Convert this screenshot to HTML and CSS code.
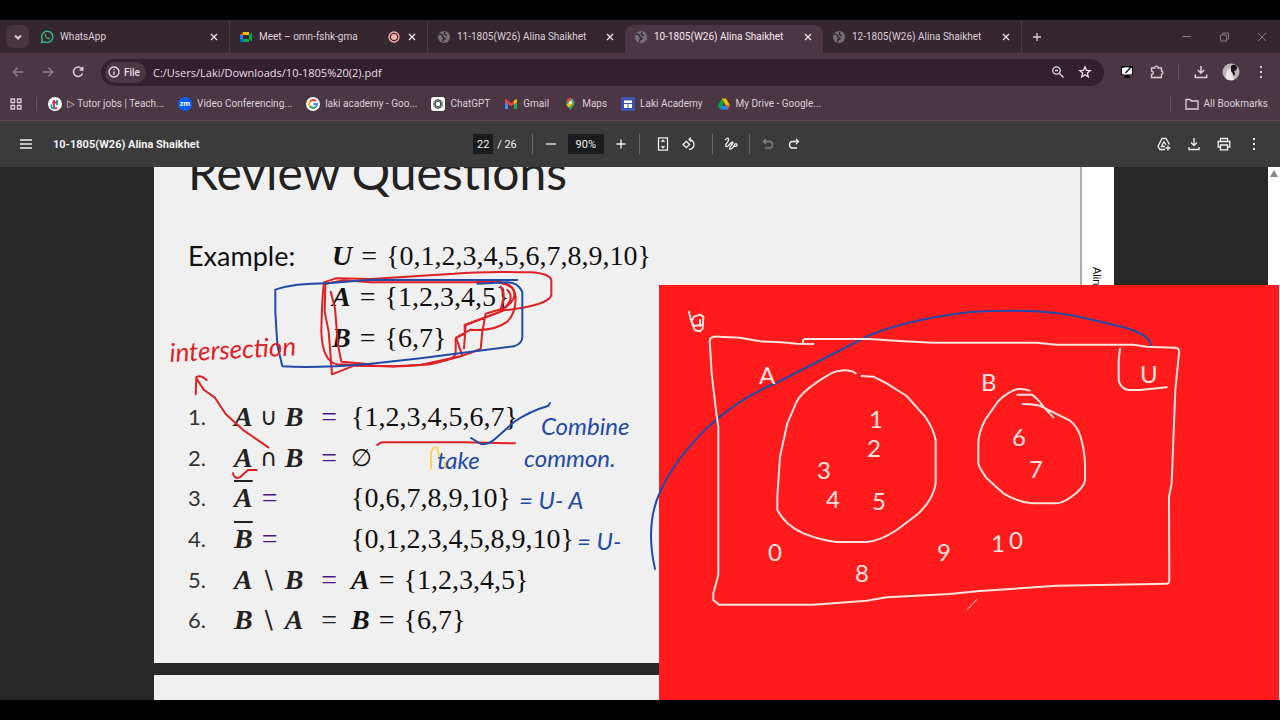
FILE: index.html
```html
<!DOCTYPE html>
<html lang="en">
<head>
<meta charset="utf-8">
<title>10-1805(W26) Alina Shaikhet</title>
<link rel="stylesheet" href="styles.css">
</head>
<body>
<svg class="defs" aria-hidden="true">
  <symbol id="close" viewBox="0 0 12 12"><path d="M3 3l6 6M9 3l-6 6"/></symbol>
  <symbol id="globe" viewBox="0 0 14 14"><circle cx="7" cy="7" r="6" fill="#77717a" stroke="none"/><path d="M2 4.500q3-1 3.500 1.500T9 8.500M8 2q-2 3 2 3.500M6 12q-1-3 2-3" stroke="#352730" stroke-width="1.500"/></symbol>
</svg>
<div class="browser">
  <header class="tabs">
    <button class="tab-search" aria-label="Search tabs"><svg class="icon small" viewBox="0 0 12 12"><path d="M3 4.500l3 3 3-3" stroke-width="2"/></svg></button>
    <div class="tab">
      <svg class="icon fav whatsapp" viewBox="0 0 14 14"><path d="M1.500 12.500l.8-3A5.600 5.600 0 1 1 4.600 11.800z" stroke-width="1.500"/><path d="M4.600 4.500c.2 3 2 4.800 4.800 5l.5-1.500-1.500-.8-.9.6C6.600 7.300 6 6.600 6 6l.6-.8-.7-1.400z" fill="currentColor" stroke="none"/></svg>
      <span class="tab-title">WhatsApp</span>
      <button class="x" aria-label="Close tab"><svg class="icon small"><use href="#close"/></svg></button>
    </div>
    <div class="tab split">
      <svg class="icon fav" viewBox="0 0 14 14" stroke="none"><path d="M1 5l3-3v3z" fill="#ea4335"/><path d="M4 2h6v3H4z" fill="#fbbc04"/><path d="M1 5h3v4H1z" fill="#2684fc"/><path d="M1 9h3v3H2q-1 0-1-1z" fill="#0066da"/><path d="M4 9h6v3H4zM10 5l3-2.500v9L10 9z" fill="#00ac47"/></svg>
      <span class="tab-title">Meet – omn-fshk-gma</span>
      <svg class="icon small rec" viewBox="0 0 12 12"><circle cx="6" cy="6" r="5" fill="none" stroke-width="1.300"/><circle cx="6" cy="6" r="3" fill="currentColor" stroke="none"/></svg>
      <button class="x" aria-label="Close tab"><svg class="icon small"><use href="#close"/></svg></button>
    </div>
    <div class="tab split">
      <svg class="icon fav"><use href="#globe"/></svg>
      <span class="tab-title">11-1805(W26) Alina Shaikhet</span>
      <button class="x" aria-label="Close tab"><svg class="icon small"><use href="#close"/></svg></button>
    </div>
    <div class="tab active">
      <svg class="icon fav"><use href="#globe"/></svg>
      <span class="tab-title">10-1805(W26) Alina Shaikhet</span>
      <button class="x" aria-label="Close tab"><svg class="icon small"><use href="#close"/></svg></button>
    </div>
    <div class="tab">
      <svg class="icon fav"><use href="#globe"/></svg>
      <span class="tab-title">12-1805(W26) Alina Shaikhet</span>
      <button class="x" aria-label="Close tab"><svg class="icon small"><use href="#close"/></svg></button>
    </div>
    <button class="new-tab split" aria-label="New tab"><svg class="icon small" viewBox="0 0 12 12"><path d="M6 2v8M2 6h8"/></svg></button>
    <div class="window-buttons">
      <button aria-label="Minimize"><svg class="icon small" viewBox="0 0 12 12"><path d="M2 5.500h9" stroke-width="1"/></svg></button>
      <button aria-label="Restore"><svg class="icon small" viewBox="0 0 12 12"><path d="M2.500 4h6v6h-6zM4.500 4V2h6v6h-2" stroke-width="1"/></svg></button>
      <button aria-label="Close window"><svg class="icon small" viewBox="0 0 12 12"><path d="M2 2l8 8M10 2l-8 8" stroke-width="1"/></svg></button>
    </div>
  </header>

  <div class="toolbar">
    <button class="tool dim" aria-label="Back"><svg class="icon" viewBox="0 0 14 14"><path d="M12.500 7h-10M6.500 2.800L2.300 7l4.200 4.200"/></svg></button>
    <button class="tool dim" aria-label="Forward"><svg class="icon" viewBox="0 0 14 14"><path d="M1.500 7h10M7.500 2.800L11.700 7l-4.200 4.200"/></svg></button>
    <button class="tool" aria-label="Reload"><svg class="icon" viewBox="0 0 14 14"><path d="M11.500 8.500A4.700 4.700 0 1 1 11 4M11.700 1.800v3.200H8.500" stroke-width="1.500"/></svg></button>
    <div class="omnibox">
      <button class="chip"><svg class="icon small" viewBox="0 0 12 12"><circle cx="6" cy="6" r="5" fill="none"/><path d="M6 5.500V9M6 3.200v1"/></svg>File</button>
      <input class="url" aria-label="Address" value="C:/Users/Laki/Downloads/10-1805%20(2).pdf">
      <button class="in-tool" aria-label="Zoom"><svg class="icon" viewBox="0 0 14 14"><circle cx="5.500" cy="5.500" r="3.700" fill="none"/><path d="M8.500 8.500l4 4M4 5.500h3"/></svg></button>
      <button class="in-tool" aria-label="Bookmark"><svg class="icon" viewBox="0 0 14 14"><path d="M7 1.800l1.500 3.500 3.800.3-2.900 2.500.9 3.700L7 9.800l-3.300 2 .9-3.700-2.900-2.500 3.800-.3z"/></svg></button>
    </div>
    <button class="tool" aria-label="Screen extension"><svg class="icon" viewBox="0 0 14 14" stroke="none"><path d="M1 1h12v9H9l1 3H4l1-3H1z" fill="#0b0b0b"/><path d="M2 3q5-1.500 10 0v6Q7 10 2 9z" fill="#fff"/><path d="M5 7.500l1 1L12 2l-1-1z" fill="#111"/></svg></button>
    <button class="tool" aria-label="Extensions"><svg class="icon" viewBox="0 0 14 14"><path d="M1.500 3h3.300q0-1.800 1.700-1.800T8.200 3h3.300v3.200q1.500 0 1.500 1.500t-1.500 1.500v3.300h-10V9.300q1.800 0 1.800-1.600T1.500 6z"/></svg></button>
    <span class="rule wide"></span>
    <button class="tool" aria-label="Downloads"><svg class="icon" viewBox="0 0 14 14"><path d="M7 1v7M3.800 5L7 8.200 10.200 5M1.300 9.500v3h11.400v-3" stroke-width="1.500"/></svg></button>
    <button class="tool" aria-label="Profile"><svg class="avatar" viewBox="0 0 18 18"><circle cx="9" cy="9" r="8.500" fill="#b8b5b6"/><path d="M4 16Q3 7 8 5l4 12q-5 1-8-1z" fill="#eee5e6"/><path d="M9 3q4-3 6 1 0 4-3 4 2 3 0 5-1-3-3-5z" fill="#171317"/></svg></button>
    <button class="tool" aria-label="Menu"><svg class="icon" viewBox="0 0 14 14" stroke="none"><path d="M6 1h2v2H6zM6 6h2v2H6zM6 11h2v2H6z" fill="currentColor"/></svg></button>
  </div>

  <nav class="bookmarks">
    <button class="apps" aria-label="Apps"><svg class="icon" viewBox="0 0 14 14"><path d="M2 2h3.500v3.500H2zM8.500 2H12v3.500H8.500zM2 8.500h3.500V12H2zM8.500 8.500H12V12H8.500z"/></svg></button>
    <span class="rule first-rule"></span>
    <a href="#" class="mark"><svg class="icon" viewBox="0 0 14 14" stroke="none"><circle cx="7" cy="7" r="7" fill="#fff"/><path d="M6 3v7q0 2 3 1M4 5.500h4" fill="none" stroke="#e0315b" stroke-width="2"/><path d="M9 3v5M3.500 7.500q-1 4 3 4" fill="none" stroke="#169d9b" stroke-width="2"/></svg>▷ Tutor jobs | Teach...</a>
    <a href="#" class="mark"><svg class="icon" viewBox="0 0 14 14" stroke="none"><circle cx="7" cy="7" r="7" fill="#0b5cff"/><text x="7" y="9" text-anchor="middle" class="zm">zm</text></svg>Video Conferencing...</a>
    <a href="#" class="mark"><svg class="icon" viewBox="0 0 14 14"><circle cx="7" cy="7" r="7" fill="#fff" stroke="none"/><path d="M10 4.200A4 4 0 0 0 3.800 4.800" stroke="#ea4335" stroke-width="2"/><path d="M3.800 4.800a4 4 0 0 0 0 4.400" stroke="#fbbc04" stroke-width="2"/><path d="M3.800 9.200a4 4 0 0 0 6 .6" stroke="#34a853" stroke-width="2"/><path d="M9.800 9.800A4 4 0 0 0 11 7H7.500" stroke="#4285f4" stroke-width="2"/></svg>laki academy - Goo...</a>
    <a href="#" class="mark"><svg class="icon" viewBox="0 0 14 14"><rect width="14" height="14" rx="3" fill="#fff" stroke="none"/><g stroke="#333" stroke-width=".8" fill="none"><ellipse cx="7" cy="7" rx="2.600" ry="4.700"/><ellipse cx="7" cy="7" rx="2.600" ry="4.700" transform="rotate(60 7 7)"/><ellipse cx="7" cy="7" rx="2.600" ry="4.700" transform="rotate(120 7 7)"/></g></svg>ChatGPT</a>
    <a href="#" class="mark"><svg class="icon" viewBox="0 0 14 14" stroke="none"><path d="M1 4l3 2v6H1z" fill="#4285f4"/><path d="M10 6l3-2v8h-3z" fill="#34a853"/><path d="M1 2.500h1.500L7 6l4.500-3.500H13V5L7 9.300 1 5z" fill="#ea4335"/><path d="M10 3.700l1.500-1.200H13V5l-3 2z" fill="#fbbc04"/></svg>Gmail</a>
    <a href="#" class="mark"><svg class="icon" viewBox="0 0 14 14" stroke="none"><path d="M3 6a4.300 4.300 0 0 1 8.600 0c0 3-3.300 4-4.300 7.500C6.300 10 3 9 3 6z" fill="#34a853"/><path d="M3.700 3.300A4.300 4.300 0 0 1 9 1.200L5 6z" fill="#ea4335"/><path d="M9 1.200a4.300 4.300 0 0 1 2 2.500L7 7z" fill="#4285f4"/><path d="M3.500 8l5.500-5 .5 4-4 3.500z" fill="#fbbc04"/><circle cx="7.300" cy="5.500" r="1.500" fill="#fff"/></svg>Maps</a>
    <a href="#" class="mark"><svg class="icon" viewBox="0 0 14 14" stroke="none"><rect width="14" height="14" rx="1" fill="#3f51b5"/><path d="M3 3.500h8v2.500H3zM3 7h3.500v4H3zM7.500 7H11v4H7.500z" fill="#fff"/></svg>Laki Academy</a>
    <a href="#" class="mark"><svg class="icon" viewBox="0 0 14 14" stroke="none"><path d="M5 1.500L.8 8.800 3 12.500l4.200-7.300z" fill="#00ac47"/><path d="M5 1.500h4l4.200 7.300H9z" fill="#ffba00"/><path d="M3 12.500l2.200-3.700h8l-2.200 3.700z" fill="#2684fc"/><path d="M13.200 8.800L11 12.500 8.800 8.800z" fill="#ea4335"/></svg>My Drive - Google...</a>
    <span class="rule push"></span>
    <button class="mark all"><svg class="icon" viewBox="0 0 14 14"><path d="M1 2.500h4l1.500 1.500H13v8H1z"/></svg>All Bookmarks</button>
  </nav>

  <div class="pdf-bar">
    <div class="pdf-left">
      <button class="pdf-tool" aria-label="Sidebar"><svg class="icon" viewBox="0 0 14 14"><path d="M1 3h12M1 7h12M1 11h12"/></svg></button>
      <span class="pdf-title">10-1805(W26) Alina Shaikhet</span>
    </div>
    <div class="pdf-center">
      <input class="page-no" aria-label="Page number" value="22"><span class="total">/ 26</span>
      <span class="rule"></span>
      <button class="pdf-tool" aria-label="Zoom out"><svg class="icon small" viewBox="0 0 12 12"><path d="M1 6h10"/></svg></button>
      <input class="zoom" aria-label="Zoom level" value="90%">
      <button class="pdf-tool" aria-label="Zoom in"><svg class="icon small" viewBox="0 0 12 12"><path d="M6 1.500v9M1.500 6h9"/></svg></button>
      <span class="rule before-fit"></span>
      <button class="pdf-tool" aria-label="Fit to page"><svg class="icon" viewBox="0 0 14 14"><path d="M2.500 .8h9v12.400h-9zM5.500 5L7 3.300 8.500 5M5.500 9L7 10.700 8.500 9"/></svg></button>
      <button class="pdf-tool" aria-label="Rotate"><svg class="icon" viewBox="0 0 14 14"><path d="M4.300 4.300l3.200 3.200-3.200 3.200L1 7.500zM7 2.500a5 5 0 1 1 0 10M9 .5l-2 2 2 2"/></svg></button>
      <span class="rule after-rotate"></span>
      <button class="pdf-tool" aria-label="Draw"><svg class="icon" viewBox="0 0 14 14"><path d="M1 3q3-3 3.500-1T2 7q-1 4 2 2l3-3q2-2 2 0L6 10q-1 3 1 2t4-5q2-1 2 1t-4 1"/></svg></button>
      <span class="rule"></span>
      <button class="pdf-tool faded" aria-label="Undo"><svg class="icon" viewBox="0 0 14 14"><path d="M5 2L2.500 4.500 5 7M2.500 4.500h6q3 0 3 3.200t-3 3.300H4"/></svg></button>
      <button class="pdf-tool" aria-label="Redo"><svg class="icon" viewBox="0 0 14 14"><path d="M9 2l2.500 2.500L9 7M11.500 4.500h-6q-3 0-3 3.200t3 3.300H10"/></svg></button>
    </div>
    <div class="pdf-right">
      <button class="pdf-tool" aria-label="Save to Drive"><svg class="icon" viewBox="0 0 14 14"><path d="M8 12.500H3L1 9.500 5 1.500h4l3.500 6M7 4.500L4.500 9.500H8M7 4.500l2 3.500M11 8.500v5M8.500 11h5"/></svg></button>
      <button class="pdf-tool" aria-label="Download"><svg class="icon" viewBox="0 0 14 14"><path d="M7 1v7M4 5.500l3 3 3-3M2 10v2.500h10V10"/></svg></button>
      <button class="pdf-tool" aria-label="Print"><svg class="icon" viewBox="0 0 14 14"><path d="M3.500 4.500v-3h7v3M3.500 10H1.200V4.500h11.600V10h-2.300M3.500 8h7v4.800h-7z"/></svg></button>
      <button class="pdf-tool" aria-label="More"><svg class="icon" viewBox="0 0 14 14" stroke="none"><path d="M6 1h2v2H6zM6 6h2v2H6zM6 11h2v2H6z" fill="currentColor"/></svg></button>
    </div>
  </div>

  <main class="viewer">
    <div class="pages">
      <article class="sheet first">
        <section class="slide">
          <h1>Review Questions</h1>
          <div class="example">
            <span class="label">Example:</span>
            <div class="sets">
              <p><b>U</b><span class="is">=</span>{0,1,2,3,4,5,6,7,8,9,10}</p>
              <p><b>A</b><span class="is">=</span>{1,2,3,4,5}</p>
              <p><b>B</b><span class="is">=</span>{6,7}</p>
            </div>
          </div>
          <ol class="questions">
            <li><span class="num">1.</span><span class="expr"><b>A</b><span class="op">∪</span><b>B</b><span class="eq">=</span></span><span>{1,2,3,4,5,6,7}</span></li>
            <li><span class="num">2.</span><span class="expr"><b>A</b><span class="op">∩</span><b>B</b><span class="eq">=</span></span><span class="empty">∅</span></li>
            <li><span class="num">3.</span><span class="expr"><b class="bar">A</b><span class="eq near">=</span></span><span>{0,6,7,8,9,10}</span></li>
            <li><span class="num">4.</span><span class="expr"><b class="bar">B</b><span class="eq near">=</span></span><span>{0,1,2,3,4,5,8,9,10}</span></li>
            <li><span class="num">5.</span><span class="expr"><b>A</b><span class="op">\</span><b>B</b><span class="eq">=</span></span><span><b>A</b><span class="is">=</span>{1,2,3,4,5}</span></li>
            <li><span class="num">6.</span><span class="expr"><b>B</b><span class="op">\</span><b>A</b><span class="eq plain">=</span></span><span><b>B</b><span class="is">=</span>{6,7}</span></li>
          </ol>
        </section>
        <aside class="margin-note">Alina Shaikhet</aside>
      </article>
      <article class="sheet"><section class="slide"></section></article>
    </div>
    <div class="scrollbar"><svg viewBox="0 0 12 14"><path d="M6 3l4 7H2z" fill="#858585"/></svg></div>
    <div class="whiteboard"></div>
    <svg class="ink" viewBox="0 167 1280 533" preserveAspectRatio="xMinYMin meet">
      <g class="red" transform="translate(154 165) scale(.33333)">
        <path d="M125 688L127 636Q140 628 158 645M127 640L150 675"/>
        <path d="M1050 436Q1110 430 1150 418Q1190 405 1192 390V345Q1185 325 1130 322Q990 318 900 326L650 342 545 340 510 352Q504 400 502 500Q505 590 550 598L700 604Q800 606 880 584Q905 580 905 560V520L932 505V480L1050 436"/>
        <path d="M514 352L512 440 524 500 534 628 600 602 720 604 830 598 920 574 980 552 985 500 995 446 1050 430Q1095 400 1075 370Q1050 345 960 352L650 352 570 346 516 356M530 380L543 430 552 540 562 590 650 598M1030 350Q1085 355 1085 400T1060 470Q1020 500 950 494L906 518 925 572 800 600M1060 375Q1080 395 1060 420L1040 440 935 480 930 550M1040 365Q1058 390 1040 432"/>
      </g>
      <g class="blue" transform="translate(154 165) scale(.33333)">
        <path d="M1090 345H880L650 344 520 355Q420 355 364 374V440L370 540 385 604Q490 610 650 596L800 580 1080 544Q1105 535 1105 515V380Q1090 352 1060 352L970 356"/>
      </g>
      <g class="red" transform="translate(154 390) scale(.33333)">
        <path d="M150 0L182 22 215 72 270 122 343 172"/>
        <path d="M237 250Q240 268 258 262L282 240 308 240M670 165Q678 156 690 157L930 157 1083 160"/>
      </g>
      <path class="yellow" d="M431 469V453Q432 447 437 447L439 456M445 462V468"/>
      <path class="blue" d="M471 438L481 444Q488 445 495 439L514 422Q530 411 548 406L550 403"/>
      <path class="blue" d="M655 569Q645 525 660 492T707 428Q737 399 778 382L870 335Q910 319 970 312Q1040 308 1080 317L1123 327Q1151 335 1151 346"/>
      <g class="white" transform="translate(650 280) scale(.33333)">
        <path d="M117 95L122 118 130 140 135 151 150 154 158 145 160 110 150 104 132 110 124 124 132 138 158 134M150 120V138"/>
        <path d="M490 192L440 191 395 187 330 184 270 173 210 170Q180 168 179 182L185 280 199 400 205 440V885L190 940V960L207 974H490L650 962 710 952 900 942 980 934 1220 917 1390 914 1550 911Q1558 912 1558 898L1557 650 1565 610 1576 330 1587 220Q1590 204 1575 203L1490 200 1450 194 1220 194 1160 188H850L735 182 660 177H465Q458 178 459 188"/>
        <path d="M617 280Q600 268 570 272Q550 272 500 307T440 365L412 430 390 530 382 650V690Q405 735 460 760Q510 780 560 786H650Q690 783 740 750L800 705Q850 660 857 610V480Q850 445 825 410L770 348 710 310 670 290 635 288"/>
        <path d="M1139 332Q1120 325 1100 328Q1075 335 1045 363L1005 420Q985 460 985 490V550Q985 560 1010 595L1060 640Q1100 665 1145 670H1220Q1245 668 1280 638Q1305 615 1305 600V550Q1302 500 1290 465Q1282 440 1260 422L1180 382Q1160 372 1118 372M1102 344H1145Q1160 352 1180 380L1210 412"/>
        <path d="M1410 206L1406 240V300Q1410 325 1435 330L1470 330 1550 322"/>
        <path class="thin" d="M952 988L980 959"/>
      </g>
      <g class="note red-text"><text x="170" y="362" transform="rotate(-3 170 362)">intersection</text></g>
      <g class="note blue-text">
        <text x="541" y="435">Combine</text><text x="437" y="469">take</text><text x="524" y="467">common.</text>
        <text x="519" y="509">= U- A</text><text x="577" y="550">= U-</text>
      </g>
      <g class="note white-text">
        <text x="759" y="384">A</text><text x="981" y="391">B</text><text x="1140" y="383">U</text>
        <text x="869" y="428">1</text><text x="867" y="457">2</text><text x="817" y="479">3</text><text x="826" y="508">4</text><text x="872" y="510">5</text>
        <text x="768" y="561">0</text><text x="855" y="582">8</text><text x="937" y="561">9</text><text x="991" y="552">1</text><text x="1009" y="549">0</text>
        <text x="1012" y="446">6</text><text x="1029" y="478">7</text>
      </g>
    </svg>
  </main>
</div>
</body>
</html>
```
FILE: styles.css
```css
* { box-sizing: border-box; }
body { margin: 0; background: #000; font-family: Roboto, "Noto Sans", sans-serif; font-size: 11px; color: #dccfd7; }
button { border: 0; background: none; color: inherit; font: inherit; padding: 0; }
input { border: 0; color: inherit; font: inherit; padding: 0; min-width: 0; }
a { color: inherit; text-decoration: none; }
h1, p, ol { margin: 0; padding: 0; }
.defs { position: absolute; width: 0; height: 0; }
.browser { height: 100vh; padding: 20px 0; display: flex; flex-direction: column; }
.icon { width: 14px; height: 14px; flex: none; display: block; fill: none; stroke: currentColor; stroke-width: 1.3; }
.icon[stroke="none"] { stroke: none; }
.small { width: 12px; height: 12px; }

.tabs { height: 33px; flex: none; display: flex; align-items: stretch; background: #352730; font-size: 10px; }
.tab-search { width: 23px; height: 23px; margin: 5px 2px 5px 6px; border-radius: 7px; background: #46363f; display: grid; place-items: center; }
.tab { flex: 0 1 198px; min-width: 0; display: flex; align-items: center; gap: 6px; padding: 0 9px; }
.tab-title { flex: 1; white-space: nowrap; overflow: hidden; }
.whatsapp { color: #35b47c; }
.x { color: #f0e2ea; }
.split { border-left: 1px solid #4b3945; }
.active { background: #4b3744; border-radius: 9px 9px 0 0; color: #f3e6ee; margin-top: 5px; padding-bottom: 5px; }
.rec { color: #ffb4ab; }
.new-tab { width: 30px; display: grid; place-items: center; }
.window-buttons { margin-left: auto; display: flex; gap: 2px; color: #85767f; }
.window-buttons button { width: 36px; display: grid; place-items: center; }

.toolbar { height: 38px; flex: none; display: flex; align-items: center; padding: 0 4px 0 3px; background: #4b3744; }
.tool { width: 30px; height: 30px; flex: none; display: grid; place-items: center; }
.dim { color: #96828e; }
.avatar { width: 18px; height: 18px; }
.omnibox { flex: 1; height: 27px; margin: 0 8px; padding: 0 6px 0 4px; border-radius: 14px; background: #33202e; display: flex; align-items: center; color: #eadde5; }
.chip { height: 21px; border-radius: 11px; background: #4b3744; padding: 0 6px 0 3px; display: flex; align-items: center; gap: 4px; font-size: 10px; font-weight: 500; }
.url { flex: 1; background: none; margin-left: 7px; font-family: "Open Sans", sans-serif; font-size: 11px; }
.in-tool { width: 27px; display: grid; place-items: center; }
.rule { width: 1px; height: 14px; background: #6a5663; flex: none; }
.rule.wide { margin: 0 7px 0 6px; }

.bookmarks { height: 30px; flex: none; display: flex; align-items: center; gap: 14px; padding: 0 12px 4px 9px; background: #4b3744; border-bottom: 1px solid #5b4a55; font-size: 10px; }
.mark { display: flex; align-items: center; gap: 5px; white-space: nowrap; }
.first-rule { margin: 0 -3px 0 -1px; }
.push { margin-left: auto; }
.zm { font: bold 7px "Open Sans", sans-serif; fill: #fff; }

.pdf-bar { height: 46px; flex: none; display: grid; grid-template-columns: 1fr auto 1fr; align-items: center; background: #3b3b3b; color: #f1f1f1; padding: 0 13px; }
.pdf-left, .pdf-center, .pdf-right { display: flex; align-items: center; }
.pdf-left { gap: 14px; }
.pdf-title { font-weight: 700; }
.pdf-right { justify-content: flex-end; gap: 4px; }
.pdf-tool { width: 26px; height: 26px; display: grid; place-items: center; }
.pdf-center .rule { background: #686868; margin: 0 5px; height: 20px; }
.pdf-center .before-fit { margin-right: 10px; }
.pdf-center .after-rotate { margin-left: 10px; }
.page-no, .zoom { background: #191b1c; height: 20px; width: 20px; text-align: center; }
.zoom { width: 36px; margin: 0 4px; }
.total { margin: 0 10px 0 4px; white-space: nowrap; }
.faded { color: #828282; }

.viewer { flex: 1; min-height: 0; position: relative; display: flex; overflow: hidden; background: #282828; }
.pages { flex: 1; display: flex; flex-direction: column; align-items: center; gap: 12px; }
.sheet { width: 960px; max-width: 100%; flex: none; display: flex; background: #fff; min-height: 300px; }
.first { height: 496px; }
.slide { width: 928px; flex: none; background: #f0f0f0; padding: 0 34px; border-right: 2px solid #aaa; color: #111; }
.scrollbar { width: 12px; background: #fff; }
.scrollbar svg { display: block; width: 12px; height: 14px; }
.margin-note { writing-mode: vertical-rl; color: #111; padding: 100px 9px 0; font-family: "Liberation Sans", sans-serif; }
h1 { font: 400 48px/46px Lato, sans-serif; margin-top: -18px; padding-bottom: 40px; white-space: nowrap; color: #222; }
.example { display: grid; grid-template-columns: 144px 1fr; font: 28px/41px "Liberation Serif", serif; }
.label { font: 27px/41px Lato, sans-serif; }
.sets p { white-space: nowrap; }
b { font-style: italic; }
.is { margin: 0 9px; }
.questions { list-style: none; margin-top: 39px; height: 244px; display: grid; grid-auto-rows: 1fr; font: 28px/40px "Liberation Serif", serif; }
.questions li { display: grid; grid-template-columns: 46px 117px 1fr; }
.num { font: 22px/40px Lato, sans-serif; color: #333; }
.expr { display: flex; color: #222; }
.op { width: 32px; text-align: center; font-family: "DejaVu Sans", sans-serif; font-size: 24px; }
.empty { font-size: 24px; }
.eq { margin-left: auto; margin-right: 14px; color: #4b168c; }
.near { margin-left: 9px; }
.plain { color: #222; }
.bar { text-decoration: overline; text-decoration-thickness: 2px; }

.whiteboard { position: absolute; left: 659px; top: 118px; right: 1px; bottom: 0; background: #ff1b1b; }
.ink { position: absolute; left: 0; top: 0; width: 100%; fill: none; stroke-linecap: round; stroke-linejoin: round; pointer-events: none; }
.ink path { vector-effect: non-scaling-stroke; stroke-width: 2px; }
.ink .thin { stroke-width: 1px; }
.red { stroke: #df2024; }
.blue { stroke: #1f4aa8; }
.white { stroke: #ffe4e0; }
.yellow { stroke: #f3d95a; }
.note { font: italic 400 24px Lato, sans-serif; }
.red-text { fill: #df2024; font-size: 26px; }
.blue-text { fill: #1f4aa8; }
.white-text { fill: #ffe4e0; font-style: normal; }
```
